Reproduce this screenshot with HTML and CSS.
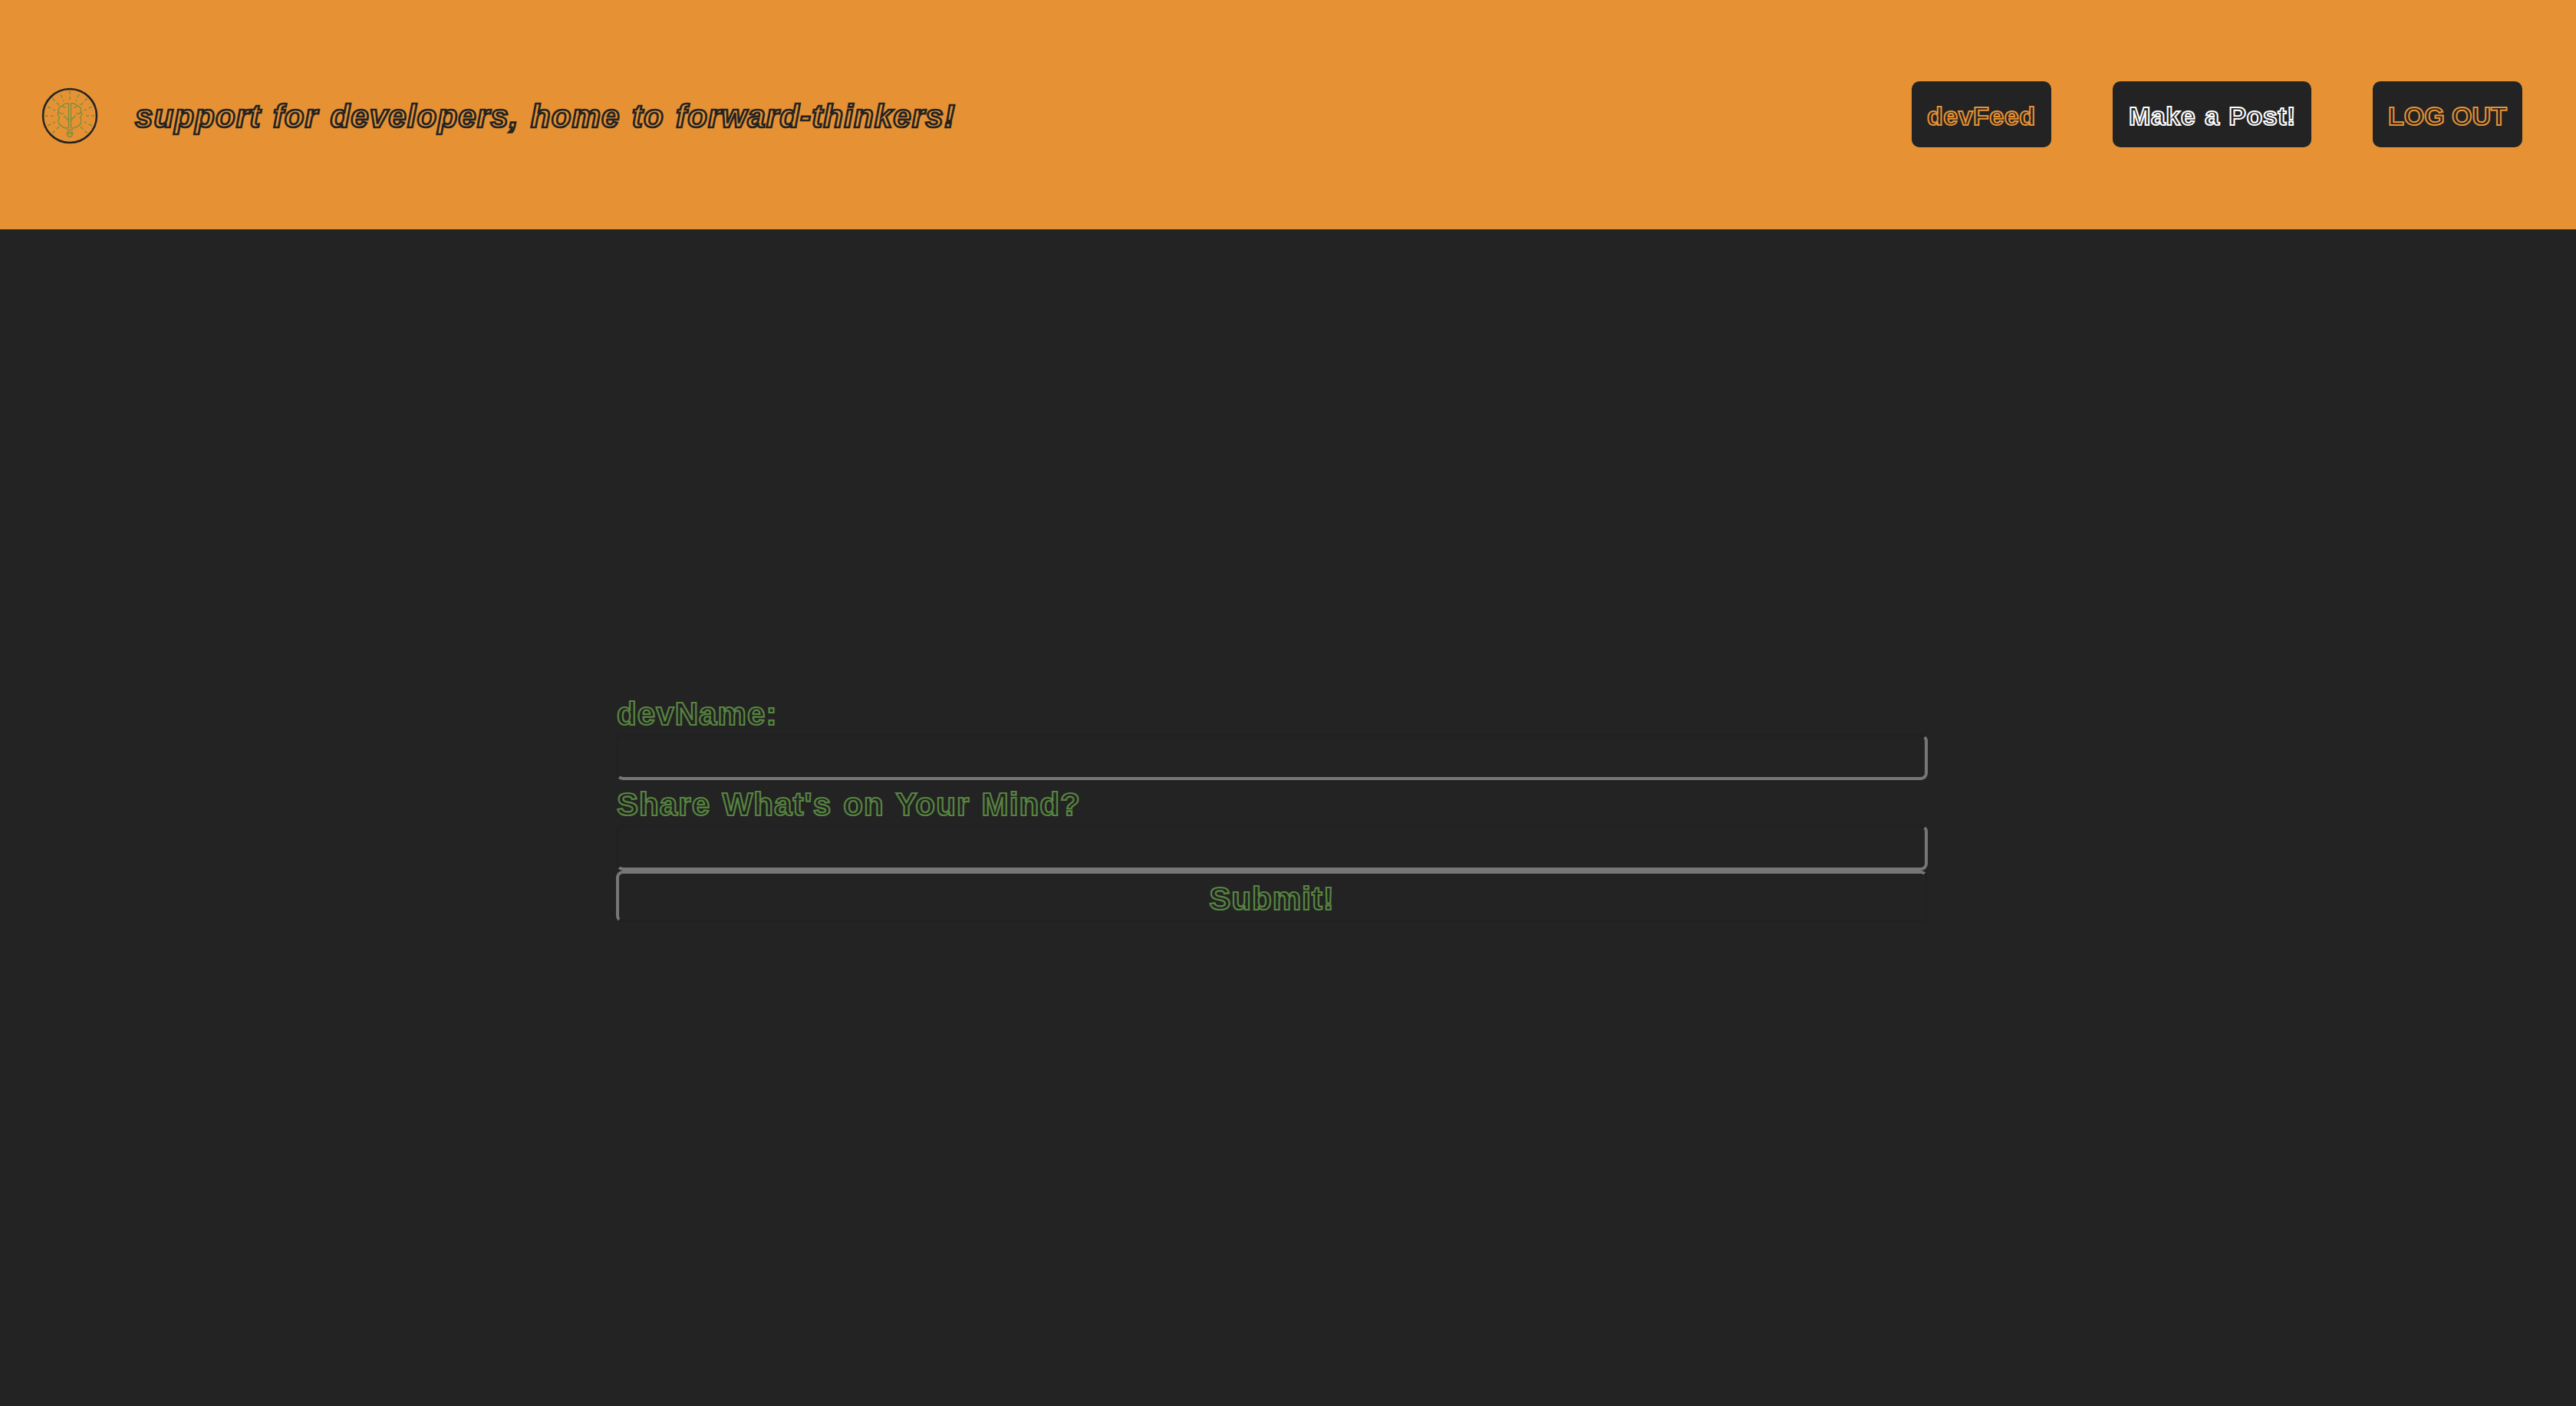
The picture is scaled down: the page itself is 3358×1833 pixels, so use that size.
FILE: index.html
```html
<!DOCTYPE html>
<html lang="en">
<head>
<meta charset="utf-8">
<title>Make a Post</title>
<link rel="stylesheet" href="styles.css">
</head>
<body>
<header class="header">
  <svg class="logo" viewBox="0 0 74 74" fill="none">
    <circle cx="37" cy="37" r="35" stroke="#232323" stroke-width="2.5"/>
    <g stroke="#80903a" stroke-width="1.5">
      <path stroke-dasharray="5 3" d="M37 4v12M4 37h12M70 37H58M14 14l10 10M60 14L50 24M14 60l9-9M60 60l-9-9M8 25l10 5M66 25l-10 5M25 9l4 9M49 9l-4 9M8 50l10-5M66 50l-10-5"/>
      <path d="M35.500 53V21c-4-1-7 1-8 3-4 0-6 4-5 7-2 3-1 6 1 8-3 5-1 10 3 11 2 3 5 3 8 3M35.500 45c0-5-4-5-6-8M22 31c1 3 4 4 7 3M27 24c1 2 3 2 5 2"/>
      <path d="M38.500 53V21c4-1 7 1 8 3 4 0 6 4 5 7 2 3 1 6-1 8 3 5 1 10-3 11-2 3-5 3-8 3M38.500 45c0-5 4-5 6-8M52 31c-1 3-4 4-7 3M47 24c-1 2-3 2-5 2"/>
      <path d="M33 55h8M33 58h8M33 60h8l-2 4h-4z"/>
    </g>
  </svg>
  <h1 class="tagline">support for developers, home to forward-thinkers!</h1>
  <nav class="nav">
    <a class="nav-link feed">devFeed</a>
    <a class="nav-link post">Make a Post!</a>
    <a class="nav-link logout">LOG OUT</a>
  </nav>
</header>
<main class="main">
  <form class="form">
    <label class="label" for="name">devName:</label>
    <input class="field" id="name" type="text">
    <label class="label" for="text">Share What's on Your Mind?</label>
    <input class="field" id="text" type="text">
    <button class="submit" type="button">Submit!</button>
  </form>
</main>
</body>
</html>
```
FILE: styles.css
```css
* { box-sizing: border-box; }
body {
  margin: 0;
  height: 1833px;
  display: flex;
  flex-direction: column;
  background: #232323;
  font-family: "Liberation Sans", Arial, sans-serif;
  font-weight: 700;
  overflow: hidden;
}
.header {
  height: 299px;
  flex: none;
  display: flex;
  align-items: center;
  padding: 0 70px 0 54px;
  background: #e69234;
}
.logo { width: 74px; height: 74px; flex: none; margin-top: 3px; }
.tagline {
  margin: 4px 0 0 48px;
  white-space: nowrap;
  font-size: 42px;
  font-style: italic;
  letter-spacing: 1.15px;
  word-spacing: 2.5px;
  color: #e69234;
  -webkit-text-stroke: 2.7px #232323;
}
.nav { display: flex; gap: 80px; margin: -1px 0 0 auto; }
.nav-link {
  height: 86px;
  display: flex;
  align-items: center;
  padding: 4px 0 0 20px;
  border-radius: 10px;
  background: #232323;
  color: #232323;
  font-size: 34px;
  letter-spacing: 0.5px;
  white-space: nowrap;
  -webkit-text-stroke: 2px #e69234;
}
.feed { width: 182px; }
.post { width: 259px; padding-left: 21px; word-spacing: 2px; -webkit-text-stroke-color: #fff; }
.logout { width: 195px; letter-spacing: 0; }
.main { flex: 1; padding: 600px 0 0 803px; }
.form { width: 1710px; display: flex; flex-direction: column; }
.label {
  height: 58px;
  padding-left: 1px;
  line-height: 63px;
  font-size: 42px;
  letter-spacing: 1.1px;
  word-spacing: 2.5px;
  color: #232323;
  -webkit-text-stroke: 2.2px #578540;
}
.field {
  height: 60px;
  border: 4px solid;
  border-color: #212121 #767676 #767676 #212121;
  border-radius: 9px;
  background: #232323;
  outline: none;
}
.submit {
  height: 68px;
  padding: 6px 0 0;
  border: 4px solid;
  border-color: #767676 #212121 #212121 #767676;
  border-radius: 9px;
  background: #232323;
  font: 700 42px "Liberation Sans", Arial, sans-serif;
  letter-spacing: 1px;
  color: #232323;
  -webkit-text-stroke: 2.2px #578540;
}
```
